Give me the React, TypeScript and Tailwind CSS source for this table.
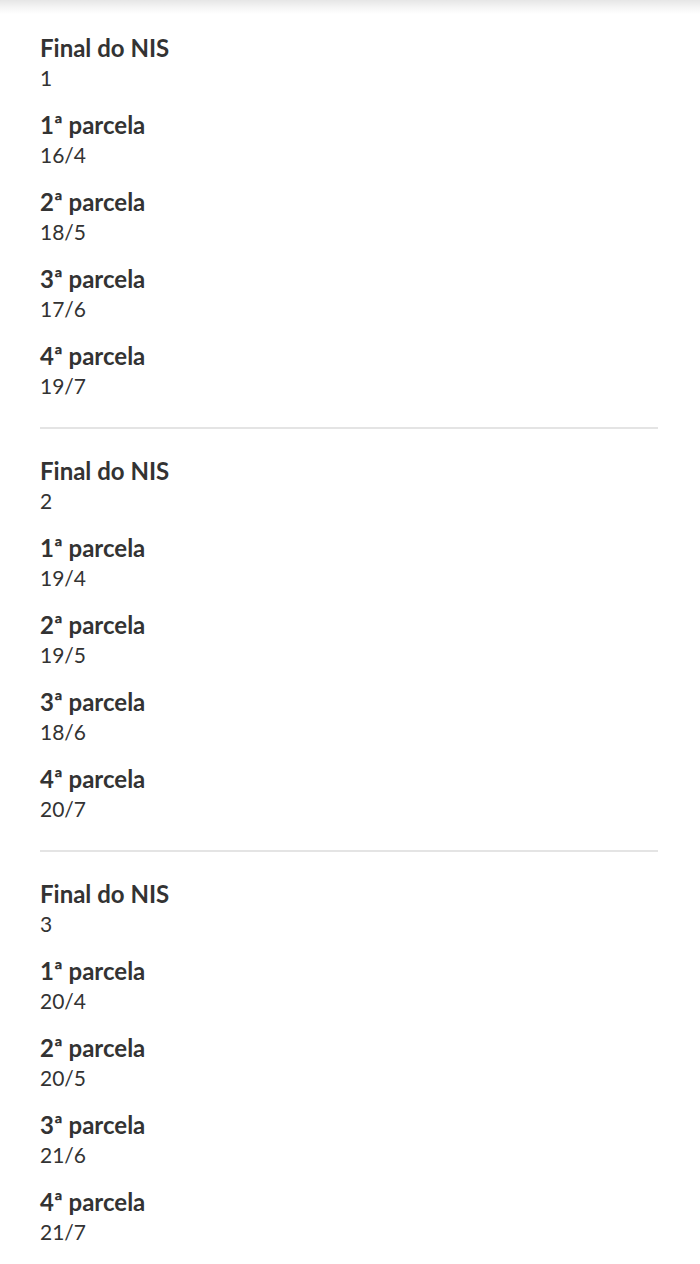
const grupos = [
  { nis: '1', parcelas: ['16/4', '18/5', '17/6', '19/7'] },
  { nis: '2', parcelas: ['19/4', '19/5', '18/6', '20/7'] },
  { nis: '3', parcelas: ['20/4', '20/5', '21/6', '21/7'] },
]

function Item({ label, value }: { label: string; value: string }) {
  return (
    <div>
      <p className="font-bold text-[24px] leading-[30px]">{label}</p>
      <p className="text-[21px] leading-[30px]">{value}</p>
    </div>
  )
}

export default function App() {
  return (
    <div
      className="min-h-screen bg-white text-[#333]"
      style={{ fontFamily: 'Lato, "Open Sans", sans-serif' }}
    >
      <div className="h-[14px] bg-gradient-to-b from-[#e6e6e6] via-[#f4f4f4] to-white" />
      <div className="pl-10 pr-[42px] pt-[19px]">
        {grupos.map((g, i) => (
          <div
            key={g.nis}
            className={`flex flex-col gap-[17px] pb-[26px] ${i < grupos.length - 1 ? 'border-b-2 border-[#e4e4e4] mb-[27px]' : ''}`}
          >
            <Item label="Final do NIS" value={g.nis} />
            {g.parcelas.map((p, j) => (
              <Item key={j} label={`${j + 1}ª parcela`} value={p} />
            ))}
          </div>
        ))}
      </div>
    </div>
  )
}
